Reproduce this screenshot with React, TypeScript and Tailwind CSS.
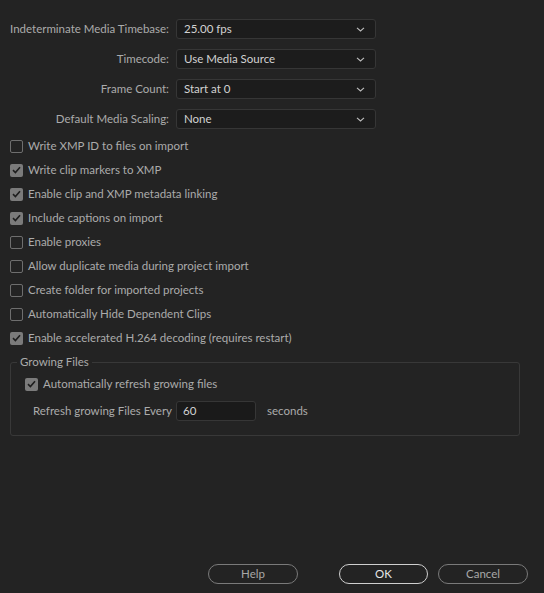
import React from "react";

const font = { fontFamily: "Lato, 'Noto Sans', sans-serif" };

function Chevron() {
  return (
    <svg width="9" height="5" viewBox="0 0 9 5" className="ml-auto">
      <path d="M1 0.8 L4.5 4 L8 0.8" fill="none" stroke="#bdbdbd" strokeWidth="1.1" />
    </svg>
  );
}

function Select({ value }: { value: string }) {
  return (
    <div className="flex h-[20px] w-[200px] items-center rounded-[3px] border border-[#363636] bg-[#1c1c1c] pl-[7px] pr-[10px] text-[11.5px] text-[#d2d2d2]">
      <span>{value}</span>
      <Chevron />
    </div>
  );
}

function Box({ checked }: { checked: boolean }) {
  return checked ? (
    <div className="flex h-[13px] w-[13px] shrink-0 items-center justify-center rounded-[2px] bg-[#7b7b7b]">
      <svg width="9" height="8" viewBox="0 0 9 8">
        <path d="M1 4.2 L3.4 6.5 L8 1.2" fill="none" stroke="#1e1e1e" strokeWidth="1.6" />
      </svg>
    </div>
  ) : (
    <div className="h-[13px] w-[13px] shrink-0 rounded-[2px] border-[1.5px] border-[#6e6e6e] bg-[#232323]" />
  );
}

function Check({ label, checked }: { label: string; checked: boolean }) {
  return (
    <div className="flex h-[24px] items-center gap-[5px] text-[11.5px] text-[#ababab]">
      <Box checked={checked} />
      <span>{label}</span>
    </div>
  );
}

export default function App() {
  const rows = [
    ["Indeterminate Media Timebase:", "25.00 fps"],
    ["Timecode:", "Use Media Source"],
    ["Frame Count:", "Start at 0"],
    ["Default Media Scaling:", "None"],
  ];
  const checks: [string, boolean][] = [
    ["Write XMP ID to files on import", false],
    ["Write clip markers to XMP", true],
    ["Enable clip and XMP metadata linking", true],
    ["Include captions on import", true],
    ["Enable proxies", false],
    ["Allow duplicate media during project import", false],
    ["Create folder for imported projects", false],
    ["Automatically Hide Dependent Clips", false],
    ["Enable accelerated H.264 decoding (requires restart)", true],
  ];
  return (
    <div style={font} className="flex h-[593px] w-[544px] flex-col bg-[#232323]">
      <div className="flex flex-col gap-[10px] pt-[19px]">
        {rows.map(([l, v]) => (
          <div key={l} className="flex items-center">
            <div className="w-[170px] whitespace-nowrap pr-[1px] text-right text-[11.5px] text-[#ababab]">{l}</div>
            <div className="ml-[6px]">
              <Select value={v} />
            </div>
          </div>
        ))}
      </div>
      <div className="mt-[5px] flex flex-col pl-[10px]">
        {checks.map(([l, c]) => (
          <Check key={l} label={l} checked={c} />
        ))}
      </div>
      <div className="relative ml-[10px] mt-[12px] h-[74px] w-[510px] rounded-[3px] border border-[#383838]">
        <div className="absolute left-[6px] top-[-9px] bg-[#232323] px-[3px] text-[11.5px] leading-[16px] text-[#ababab]">
          Growing Files
        </div>
        <div className="flex flex-col pl-[14px] pt-[9px]">
          <Check label="Automatically refresh growing files" checked={true} />
          <div className="mt-[5px] flex items-center pl-[8px] text-[11.5px] text-[#ababab]">
            <span className="w-[143px] whitespace-nowrap">Refresh growing Files Every</span>
            <div className="flex h-[20px] w-[80px] items-center rounded-[3px] border border-[#363636] bg-[#1a1a1a] pl-[6px] text-[#d2d2d2]">
              60
            </div>
            <span className="ml-[11px]">seconds</span>
          </div>
        </div>
      </div>
      <div className="mt-auto mb-[9px] flex items-center pl-[208px] text-[11.5px]">
        <div className="flex h-[20px] w-[90px] items-center justify-center rounded-full border border-[#7a7a7a] text-[#a8a8a8]">Help</div>
        <div className="ml-[41px] flex h-[20px] w-[89px] items-center justify-center rounded-full border border-[#cfcfcf] text-[#e8e8e8]">OK</div>
        <div className="ml-[10px] flex h-[20px] w-[90px] items-center justify-center rounded-full border border-[#7a7a7a] text-[#a8a8a8]">Cancel</div>
      </div>
    </div>
  );
}
